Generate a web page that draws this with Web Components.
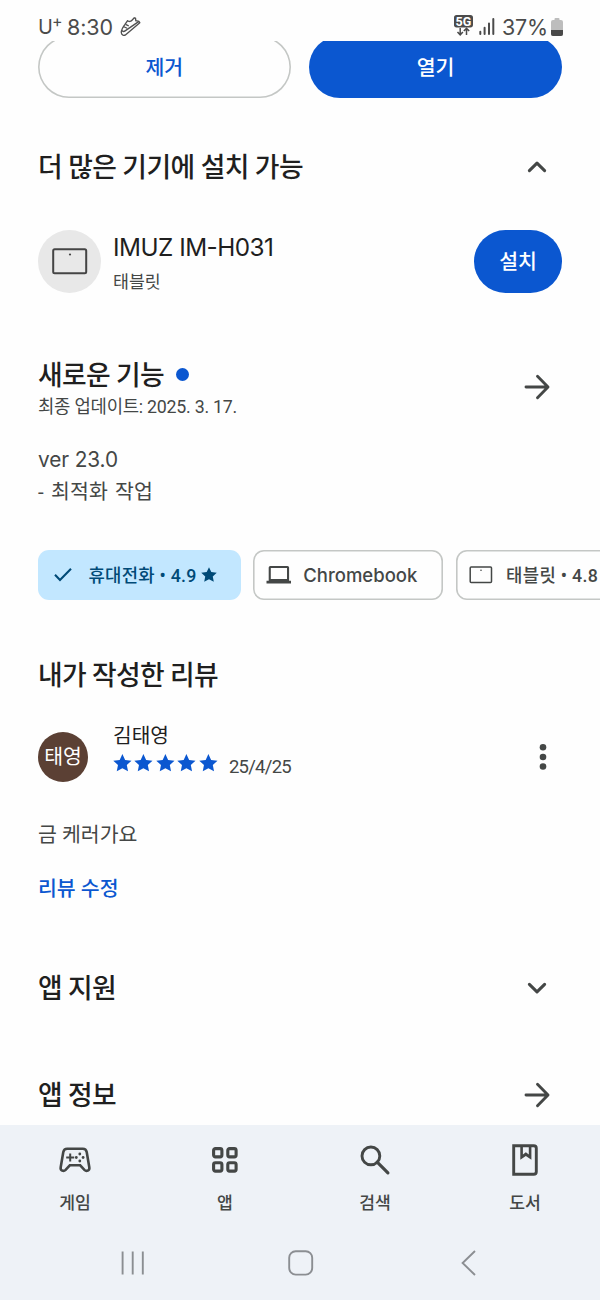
<!DOCTYPE html>
<html lang="ko">
<head>
<meta charset="utf-8">
<title>앱 상세</title>
<style>
html,body{margin:0;background:#fefefe}
body{width:600px;height:1300px;overflow:hidden;font-family:Roboto,"Noto Sans CJK KR",sans-serif;color:#1f1f1f}
</style>
</head>
<body>
<store-page></store-page>
<script>
function define(name, html, ready) {
  customElements.define(name, class extends HTMLElement {
    connectedCallback() {
      if (this.shadowRoot) return;
      const t = document.createElement('template');
      t.innerHTML = html;
      this.attachShadow({ mode: 'open' }).appendChild(t.content.cloneNode(true));
      if (ready) ready.call(this, this.shadowRoot);
    }
  });
}

const ICONS = {
  shoe: ['0 0 22 22', '<g fill="none" stroke="#505050" stroke-width="1.35" stroke-linejoin="round" stroke-linecap="round"><path d="M1.3 16.6C1.4 13.6 3.2 10.6 5 8.4L7.6 4.6c1.2 1.4 3 1 4.4-.4l2.300-2.400 1.200.3.300 2.700c1 .1 2.100-.2 3 .5l1 1.400L5.400 18.900c-1.200.9-4 .4-4.100-2.300z"/><path d="M2 14.600c.8 1.100 1.900 1.200 3.100.3L18.600 5.600M6 8.700l2.200 1M4.400 11l2.200 1"/></g>'],
  fiveg: ['0 0 20 22', '<rect x="1" width="19" height="12.4" rx="2.6" fill="#4b4b4b"/><path d="M7.2 13v6.5M4.5 17l2.7 2.8L9.9 17M13.5 20v-6.5M10.8 16l2.7-2.7 2.7 2.7" fill="none" stroke="#4b4b4b" stroke-width="1.5"/>'],
  signal: ['0 0 16 17', '<path d="M1.3 13.7v2.3M5.6 9.7V16M10 5.5v10.5M14.3 1v15" stroke="#4b4b4b" stroke-width="2" stroke-linecap="round"/>'],
  battery: ['0 0 12 18', '<path d="M3.5 2V1q0-1 1-1h3q1 0 1 1v1H10q2 0 2 2v12q0 2-2 2H2q-2 0-2-2V4q0-2 2-2z" fill="#bdbdbd"/><path d="M0 12h12v4q0 2-2 2H2q-2 0-2-2z" fill="#494949"/>'],
  up: ['0 0 20 12', '<path d="M2.400 9.600 10 2.200 17.600 9.600" fill="none" stroke="#444746" stroke-width="3.1" stroke-linecap="round" stroke-linejoin="round"/>'],
  down: ['0 0 20 12', '<path d="M2.400 2.400 10 9.800 17.600 2.400" fill="none" stroke="#444746" stroke-width="3.1" stroke-linecap="round" stroke-linejoin="round"/>'],
  arrow: ['0 0 26 26', '<path d="M2 13h21.5M13.5 2.3 24 13 13.5 23.7" fill="none" stroke="#444746" stroke-width="2.9" stroke-linecap="round" stroke-linejoin="round"/>'],
  tablet: ['0 0 36 27', '<rect x="1.2" y="1.2" width="33" height="24" rx="1.5" fill="none" stroke="#444" stroke-width="2"/><circle cx="18" cy="6.5" r="1.1" fill="#444"/>'],
  tabletSmall: ['0 0 24 18', '<rect x="1.2" y="1" width="21.3" height="15.6" rx="1" fill="none" stroke="#444746" stroke-width="1.5"/><circle cx="12" cy="4.2" r=".8" fill="#444746"/>'],
  laptop: ['0 0 26 20', '<path fill-rule="evenodd" d="M4.3 1h17.200q1.600 0 1.600 1.600v13.200H25v2.700H.5v-2.700h2.200V2.600Q2.700 1 4.300 1zM4.800 3v11h16.200V3z" fill="#444746"/>'],
  check: ['0 0 20 16', '<path d="m2 7.8 5 5.2L18 1.8" fill="none" stroke="#004a77" stroke-width="2.1"/>'],
  star: ['0 0 20 19', '<path fill="currentColor" d="m10 0 2.9 6.2 6.8.8-5 4.6 1.3 6.8-6-3.4-6 3.4 1.3-6.8-5-4.6 6.8-.8z"/>'],
  more: ['0 0 8 26', '<g fill="#444746"><circle cx="4" cy="3.3" r="3.3"/><circle cx="4" cy="13" r="3.3"/><circle cx="4" cy="22.5" r="3.3"/></g>'],
  game: ['0 0 32 26', '<path d="M8.2 1.8h15.6c2.2 0 3.5 1.3 3.9 3.2l2.6 15.2c.6 3.6-2.9 4.6-4.9 2.6l-4.2-4.5H10.800l-4.2 4.5c-2 2-5.500 1-4.900-2.600L4.300 5c.4-1.900 1.700-3.200 3.900-3.200z" fill="none" stroke="#444746" stroke-width="2.6"/><path d="M11.200 6.600v8M7.200 10.600h8" stroke="#444746" stroke-width="2"/><g fill="#444746"><circle cx="20.800" cy="7" r="1.4"/><circle cx="20.800" cy="14" r="1.4"/><circle cx="17.300" cy="10.500" r="1.4"/><circle cx="24.100" cy="10.500" r="1.4"/></g>'],
  apps: ['0 0 28 28', '<g fill="none" stroke="#444746" stroke-width="3.1"><rect x="2.6" y="2.6" width="8.3" height="8.3" rx="1.8"/><rect x="16.800" y="2.6" width="8.3" height="8.3" rx="1.8"/><rect x="2.6" y="16.800" width="8.3" height="8.3" rx="1.8"/><rect x="16.800" y="16.800" width="8.3" height="8.3" rx="1.8"/></g>'],
  search: ['0 0 30 30', '<circle cx="10.9" cy="10.9" r="8.9" fill="none" stroke="#444746" stroke-width="2.9"/><path d="m17.2 17.2 10.7 10.6" stroke="#444746" stroke-width="3.2" stroke-linecap="round"/>'],
  book: ['0 0 26 32', '<path d="M1.7 1.7h20q2.6 0 2.6 2.6v23.4q0 2.6-2.6 2.6h-20z" fill="none" stroke="#444746" stroke-width="2.9"/><path fill-rule="evenodd" d="M8.300 1h11.100v14.800L13.850 12 8.300 15.800zM10.900 3v7.600l2.950-2.400 2.950 2.400V3z" fill="#444746"/>'],
  recent: ['0 0 24 24', '<path d="M1.6 .5v23M11.700 .5v23M21.800 .5v23" stroke="#8b8e92" stroke-width="1.9"/>'],
  home: ['0 0 26 26', '<rect x="1.2" y="1.2" width="23" height="23.4" rx="6.5" fill="none" stroke="#8b8e92" stroke-width="1.9"/>'],
  back: ['0 0 16 26', '<path d="M14 1 1.6 13 14 25" fill="none" stroke="#8b8e92" stroke-width="1.9"/>']
};

/* Icon: name, w and h attributes */
define('ui-icon', '<style>:host{display:block;flex:none}svg{display:block;overflow:visible}</style><svg></svg>', function (root) {
  const svg = root.querySelector('svg'), icon = ICONS[this.getAttribute('name')];
  svg.setAttribute('viewBox', icon[0]);
  svg.setAttribute('width', this.getAttribute('w'));
  svg.setAttribute('height', this.getAttribute('h'));
  svg.innerHTML = icon[1];
});

/* One line of text; w tracks it out or in to a set width */
define('ui-text', '<style>:host{display:block;white-space:nowrap;flex:none}:host([latin]){font-family:Inter,Roboto,sans-serif}span{display:inline-block}</style><span><slot></slot></span>', function (root) {
  this.style.fontSize = this.getAttribute('size') + 'px';
  this.style.lineHeight = this.getAttribute('lh') + 'px';
  const weight = this.getAttribute('weight');
  if (weight) this.style.fontWeight = weight;
  const w = +this.getAttribute('w');
  if (!w) return;
  const n = this.textContent.length;
  const natural = root.querySelector('span').getBoundingClientRect().width;
  this.style.letterSpacing = ((w - natural) / n) + 'px';
});

define('status-bar', `<style>
:host{display:flex;box-sizing:border-box;height:41px;padding:12px 37px 0 38px;align-items:flex-start;color:#4b4b4b}
.sup{margin:-2px 0 0 0}.time{margin-left:5px}.shoe{margin:4px 0 0 7px}.gap{flex:1}
.net{display:grid;margin:3px 6px 0 0;width:20px}.net>*{grid-area:1/1}.net ui-text{color:#fff;justify-self:center;padding-left:1px}
.sig{margin:6px 7px 0 0}.bat{margin:6px 0 0 3px}
</style>
<ui-text latin size="20" lh="31" w="14">U</ui-text><ui-text latin class="sup" size="16" lh="22" w="10">+</ui-text>
<ui-text latin class="time" size="21.5" lh="31" w="46">8:30</ui-text><ui-icon class="shoe" name="shoe" w="22" h="22"></ui-icon>
<span class="gap"></span>
<div class="net"><ui-icon name="fiveg" w="20" h="22"></ui-icon><ui-text size="12.5" lh="13" weight="700" w="16">5G</ui-text></div>
<ui-icon class="sig" name="signal" w="16" h="17"></ui-icon>
<ui-text latin size="21.5" lh="31" w="46">37%</ui-text><ui-icon class="bat" name="battery" w="12" h="18"></ui-icon>`);

define('pill-button', `<style>
:host{display:flex;box-sizing:border-box;align-items:center;justify-content:center;border-radius:32px;background:#0b57d0;color:#fff}
:host([outlined]){background:none;box-shadow:inset 0 0 0 1.6px #c4c7c5;color:#0b57d0}
</style><ui-text size="20.5" lh="30" weight="500"><slot></slot></ui-text>`);

define('action-row', `<style>
:host{display:flex;height:57px;overflow:hidden;align-items:flex-end;padding:0 38px;gap:18.5px}
pill-button{flex:1 1 0;height:62px;padding-top:1px}
</style><pill-button outlined>제거</pill-button><pill-button>열기</pill-button>`);

/* Section title with a trailing icon slot */
define('section-head', `<style>
:host{display:flex;align-items:center;justify-content:space-between;height:40px;padding:0 50px 0 38px}
::slotted(ui-text){margin-top:2px}
</style><slot></slot><slot name="end"></slot>`);

define('device-row', `<style>
:host{display:flex;height:63px;padding:0 38px;margin-top:43px}
.disc{display:flex;align-items:center;justify-content:center;width:63px;height:63px;border-radius:50%;background:#e8e8e8}
.info{flex:1;padding-left:12px}.sub{color:#444746;margin-top:3px}
pill-button{width:88px}
</style><div class="disc"><ui-icon name="tablet" w="36" h="27"></ui-icon></div>
<div class="info"><ui-text latin size="24.3" lh="35" w="160.5">IMUZ IM-H031</ui-text><ui-text class="sub" size="17.3" lh="28">태블릿</ui-text></div>
<pill-button>설치</pill-button>`);

define('whats-new', `<style>
:host{display:block;margin-top:61px;height:154px;color:#444746}
.top{display:flex;justify-content:space-between;align-items:center;padding:0 50px 0 38px;height:66px}
.title{display:flex;align-items:center;color:#1f1f1f;height:40px}
.title ui-text{margin-top:1px}.dot{width:13px;height:13px;border-radius:50%;background:#0b57d0;margin:-1px 0 0 12px}
.notes{padding:24px 38px 0}
</style>
<div class="top"><div><div class="title"><ui-text size="26.8" lh="40" weight="500" w="126">새로운 기능</ui-text><span class="dot"></span></div>
<ui-text size="17.8" lh="24" w="199">최종 업데이트: 2025. 3. 17.</ui-text></div>
<ui-icon name="arrow" w="26" h="26"></ui-icon></div>
<div class="notes"><ui-text latin size="20.8" lh="32" w="80">ver 23.0</ui-text><ui-text style="word-spacing:2px" size="20.5" lh="32" w="115">- 최적화 작업</ui-text></div>`);

define('filter-chip', `<style>
:host{display:flex;box-sizing:border-box;flex:none;align-items:center;height:50px;box-shadow:inset 0 0 0 1.6px #c4c7c5;border-radius:11px;color:#444746}
:host([selected]){background:#c2e7ff;box-shadow:none;color:#004a77}
</style><slot></slot>`);

define('chip-row', `<style>
:host{display:flex;gap:12.8px;height:50px;padding-left:37.5px;margin-top:42px;overflow:hidden}
ui-text{padding-top:2px}ui-text[latin]{padding-top:0}
.a{width:203px;padding-left:15px}.b{width:190px;padding-left:13px}.c{width:230px;padding-left:13px}
</style>
<filter-chip class="a" selected><ui-icon name="check" w="20" h="16"></ui-icon><ui-text style="margin-left:16px" size="17.8" lh="26" weight="500" w="108">휴대전화 • 4.9</ui-text><ui-icon style="margin-left:4px" name="star" w="16" h="15.5"></ui-icon></filter-chip>
<filter-chip class="b"><ui-icon name="laptop" w="26" h="20"></ui-icon><ui-text latin style="margin-left:11px" size="18.5" lh="26" weight="500" w="114">Chromebook</ui-text></filter-chip>
<filter-chip class="c"><ui-icon name="tabletSmall" w="24" h="18"></ui-icon><ui-text style="margin-left:13px" size="17.8" lh="26" weight="500" w="92">태블릿 • 4.8</ui-text></filter-chip>`);

define('my-review', `<style>
:host{display:block;height:184px;margin-top:25px}
.head{display:flex;align-items:flex-start;padding:0 53px 0 38px;height:64px}
.avatar{display:flex;align-items:center;justify-content:center;width:50px;height:50px;border-radius:50%;background:#5b4034;color:#fff;margin-top:11.5px}
.avatar ui-text{padding-top:1px}
.who{flex:1;padding:1px 0 0 25px}.rate{display:flex;align-items:center;height:24px;color:#0b57d0;gap:2.6px}
.rate ui-text{color:#444746;margin:7px 0 0 9px}.more{margin-top:24px}
.body{color:#444746;padding:36px 38px 0}.edit{color:#0b57d0;padding:24px 38px 0}
</style>
<div class="head"><div class="avatar"><ui-text size="20.5" lh="28">태영</ui-text></div>
<div class="who"><ui-text size="20.3" lh="30">김태영</ui-text><div class="rate">
<ui-icon name="star" w="18.8" h="18"></ui-icon><ui-icon name="star" w="18.8" h="18"></ui-icon><ui-icon name="star" w="18.8" h="18"></ui-icon><ui-icon name="star" w="18.8" h="18"></ui-icon><ui-icon name="star" w="18.8" h="18"></ui-icon>
<ui-text size="18.5" lh="24" w="62">25/4/25</ui-text></div></div>
<ui-icon class="more" name="more" w="8" h="26"></ui-icon></div>
<ui-text class="body" size="20.5" lh="30" >금 케러가요</ui-text>
<ui-text class="edit" size="20.5" lh="30" weight="500">리뷰 수정</ui-text>`);

define('nav-item', `<style>
:host{display:flex;flex-direction:column;align-items:center;flex:1;color:#444746}
.ic{height:34px;display:flex;align-items:center}ui-text{margin-top:14px}
</style><div class="ic"><slot name="icon"></slot></div><ui-text size="17.2" lh="24" weight="500"><slot></slot></ui-text>`);

define('bottom-bar', `<style>
:host{display:block;box-sizing:border-box;height:175px;background:#eef2f7;padding-top:17.5px}
.tabs{display:flex;height:106px}
.sys{display:flex;justify-content:space-between;align-items:center;padding:0 123px 0 121px;height:29px}
.sys [name=home]{margin-right:4px}
</style><div class="tabs">
<nav-item><ui-icon slot="icon" name="game" w="32" h="26"></ui-icon>게임</nav-item>
<nav-item><ui-icon slot="icon" name="apps" w="28" h="28"></ui-icon>앱</nav-item>
<nav-item><ui-icon slot="icon" name="search" w="30" h="30"></ui-icon>검색</nav-item>
<nav-item><ui-icon slot="icon" name="book" w="26" h="32"></ui-icon>도서</nav-item>
</div><div class="sys"><ui-icon name="recent" w="24" h="24"></ui-icon><ui-icon name="home" w="26" h="26"></ui-icon><ui-icon name="back" w="16" h="26"></ui-icon></div>`);

define('store-page', `<style>
:host{display:flex;flex-direction:column;width:600px;height:1300px;overflow:hidden}
:host>*{flex:none}bottom-bar{margin-top:auto}
</style>
<status-bar></status-bar><action-row></action-row>
<section-head style="margin-top:49px"><ui-text size="26.8" lh="40" weight="500" w="265">더 많은 기기에 설치 가능</ui-text><ui-icon slot="end" style="margin-right:3px" name="up" w="20" h="12"></ui-icon></section-head>
<device-row></device-row>
<whats-new></whats-new>
<chip-row></chip-row>
<section-head style="margin-top:55px"><ui-text size="26.8" lh="40" weight="500" w="180">내가 작성한 리뷰</ui-text></section-head>
<my-review></my-review>
<section-head style="margin-top:64px"><ui-text size="26.8" lh="40" weight="500" w="78">앱 지원</ui-text><ui-icon slot="end" style="margin-right:3px" name="down" w="20" h="12"></ui-icon></section-head>
<section-head style="margin-top:67px"><ui-text size="26.8" lh="40" weight="500" w="78">앱 정보</ui-text><ui-icon slot="end" name="arrow" w="26" h="26"></ui-icon></section-head>
<bottom-bar></bottom-bar>`);
</script>
</body>
</html>
